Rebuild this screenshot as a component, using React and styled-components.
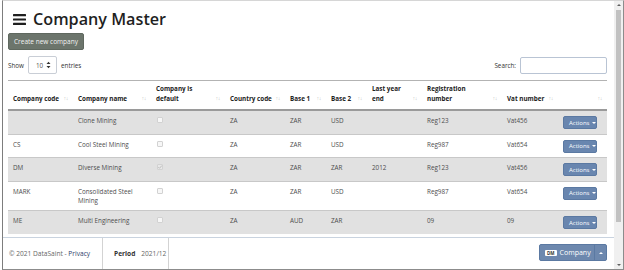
import React from "react";
import styled, { createGlobalStyle } from "styled-components";

const GlobalStyle = createGlobalStyle`
  html, body { margin: 0; padding: 0; background: #fff; overflow: hidden; }
  body { font-family: "Open Sans", "Noto Sans", sans-serif; color: #333; }
  * { box-sizing: border-box; }
`;

const Frame = styled.div`
  width: 622px;
  height: 270px;
  margin-left: 2px;
  border-left: 1px solid #7d7d7d;
  border-top: 1px solid #d6d6d6;
  border-right: 1px solid #8c8c8c;
  border-bottom: 1px solid #8c8c8c;
  display: flex;
`;

const Viewport = styled.div`
  flex: 1;
  min-width: 0;
  display: flex;
  flex-direction: column;
  overflow: hidden;
`;

const ScrollTrack = styled.div`
  width: 9px;
  display: flex;
  flex-direction: column;
  align-items: center;
  background: #f0f0f0;
`;

const ScrollArrow = styled.div`
  width: 100%;
  height: 8px;
  display: flex;
  align-items: center;
  justify-content: center;
  &::before {
    content: "";
    border-left: 2px solid transparent;
    border-right: 2px solid transparent;
    ${(p) => (p.$down ? "border-top: 2px solid #606060;" : "border-bottom: 2px solid #606060;")}
  }
`;

const ScrollThumb = styled.div`
  width: 5px;
  height: 212px;
  margin-top: 1px;
  background: #c1c1c1;
`;

const ScrollRest = styled.div`
  flex: 1;
`;

const Main = styled.main`
  flex: 1;
  min-height: 0;
  overflow: hidden;
  padding: 6px 7px 0 5px;
`;

const TitleRow = styled.div`
  display: flex;
  align-items: center;
  gap: 7px;
  height: 24px;
  padding-left: 5px;
`;

const Title = styled.h1`
  margin: 0;
  font-size: 16.2px;
  font-weight: 600;
  line-height: 24px;
  color: #1f1f1f;
`;

const CreateButton = styled.button`
  display: block;
  margin-top: 2px;
  height: 17px;
  padding: 0 5px;
  border: 1px solid #5f685f;
  border-radius: 2px;
  background: #6c756c;
  color: #f2f2f2;
  font-family: inherit;
  font-size: 6.5px;
`;

const Controls = styled.div`
  display: flex;
  justify-content: space-between;
  align-items: center;
  margin-top: 6px;
  height: 18px;
  font-size: 6.3px;
  color: #333;
`;

const Group = styled.label`
  display: flex;
  align-items: center;
  gap: 4px;
`;

const SelectBox = styled.div`
  display: flex;
  align-items: center;
  justify-content: space-between;
  width: 29px;
  height: 18px;
  padding: 0 5px 0 7px;
  border: 1px solid #c9ced6;
  border-radius: 2px;
  color: #555;
  font-size: 6.3px;
`;

const SearchInput = styled.div`
  width: 87px;
  height: 17px;
  border: 1px solid #b9c4d4;
  border-radius: 2px;
`;

const Table = styled.table`
  margin-top: 6px;
  width: 100%;
  table-layout: fixed;
  border-collapse: collapse;
  border-top: 1px solid #b3b3b3;
  font-size: 6.3px;
  line-height: 9.5px;
`;

const Th = styled.th`
  position: relative;
  padding: 3px 9px 6px 5px;
  text-align: left;
  vertical-align: bottom;
  font-weight: 700;
  color: #222;
  border-bottom: 2px solid #9a9a9a;
`;

const SortIcon = styled.span`
  position: absolute;
  right: 5px;
  bottom: 6px;
  color: #c4c4c4;
  font-weight: 400;
  font-size: 5.5px;
  letter-spacing: -0.5px;
  white-space: nowrap;
`;

const Tr = styled.tr`
  background: ${(p) => (p.$striped ? "#e1e1e1" : "#fff")};
`;

const Td = styled.td`
  padding: 5px 5px 4.5px;
  vertical-align: top;
  color: #4d4d4d;
  border-top: 1px solid #c8c8c8;
`;

const Check = styled.span`
  display: block;
  width: 6px;
  height: 6px;
  margin-top: 1px;
  margin-left: 1px;
  border: 1px solid #d2d2d2;
  border-radius: 1px;
  background: ${(p) => (p.$checked ? "#e8e8e8" : "#f7f7f7")};
  position: relative;
`;

const ActionsButton = styled.button`
  display: flex;
  align-items: center;
  gap: 3px;
  height: 13px;
  width: 34px;
  padding: 0 0 0 5px;
  border: 1px solid #5b79a2;
  border-radius: 2px;
  background: #6986af;
  color: #fff;
  font-family: inherit;
  font-size: 6px;
`;

const Caret = styled.span`
  width: 0;
  height: 0;
  border-left: 2px solid transparent;
  border-right: 2px solid transparent;
  border-top: 2px solid #fff;
`;

const Footer = styled.footer`
  flex: none;
  height: 32px;
  display: flex;
  align-items: stretch;
  background: #fff;
  border-top: 1px solid #c9d3df;
  font-size: 6.6px;
  color: #666;
`;

const FooterCell = styled.div`
  display: flex;
  align-items: center;
  gap: 5px;
  width: ${(p) => p.$width}px;
  padding-left: ${(p) => p.$pad}px;
  border-right: 1px solid #d3d3d3;
  white-space: nowrap;
`;

const Link = styled.a`
  color: #2c3b6b;
  text-decoration: none;
`;

const Strong = styled.b`
  color: #333;
  margin-right: 1px;
`;

const Spacer = styled.div`
  flex: 1;
`;

const SplitButton = styled.div`
  display: flex;
  align-self: flex-start;
  margin: 6px 7px 0 0;
  height: 17px;
  border: 1px solid #5b79a2;
  border-radius: 2px;
  background: #6d88ae;
  color: #fff;
`;

const SplitMain = styled.div`
  display: flex;
  align-items: center;
  gap: 3px;
  width: 55px;
  padding-left: 5px;
  font-size: 7px;
  border-right: 1px solid #5b79a2;
`;

const Badge = styled.span`
  background: #fff;
  color: #333;
  font-weight: 700;
  font-size: 4.5px;
  line-height: 6px;
  padding: 0 2px;
  border-radius: 1px;
`;

const SplitToggle = styled.div`
  display: flex;
  align-items: center;
  justify-content: center;
  width: 11px;
`;

const CaretUp = styled.span`
  width: 0;
  height: 0;
  border-left: 2px solid transparent;
  border-right: 2px solid transparent;
  border-bottom: 2px solid #fff;
`;

const columns = [
  { label: "Company code", width: 65 },
  { label: "Company name", width: 78 },
  { label: <>Company is<br />default</>, width: 74 },
  { label: "Country code", width: 60 },
  { label: "Base 1", width: 41 },
  { label: "Base 2", width: 41 },
  { label: <>Last year<br />end</>, width: 55 },
  { label: <>Registration<br />number</>, width: 80 },
  { label: "Vat number", width: 56 },
  { label: "", width: 49 },
];

const rows = [
  ["", "Clone Mining", false, "ZA", "ZAR", "USD", "", "Reg123", "Vat456"],
  ["CS", "Cool Steel Mining", false, "ZA", "ZAR", "USD", "", "Reg987", "Vat654"],
  ["DM", "Diverse Mining", true, "ZA", "ZAR", "ZAR", "2012", "Reg123", "Vat456"],
  ["MARK", "Consolidated Steel Mining", false, "ZA", "ZAR", "USD", "", "Reg987", "Vat654"],
  ["ME", "Multi Engineering", false, "ZA", "AUD", "ZAR", "", "09", "09"],
];

const Hamburger = () => (
  <svg width="13" height="11" viewBox="0 0 13 11">
    <rect x="0" y="0" width="13" height="2.2" rx="0.5" fill="#1f1f1f" />
    <rect x="0" y="4.4" width="13" height="2.2" rx="0.5" fill="#1f1f1f" />
    <rect x="0" y="8.8" width="13" height="2.2" rx="0.5" fill="#1f1f1f" />
  </svg>
);

const UpDown = () => (
  <svg width="5" height="8" viewBox="0 0 5 8">
    <path d="M0.5 3 L2.5 0.8 L4.5 3 Z M0.5 5 L2.5 7.2 L4.5 5 Z" fill="#333" />
  </svg>
);

const CheckMark = () => (
  <svg width="6" height="6" viewBox="0 0 6 6" style={{ position: "absolute", left: -1, top: -1 }}>
    <path d="M1.3 3.1 L2.5 4.3 L4.8 1.6" stroke="#b9b9b9" strokeWidth="0.9" fill="none" />
  </svg>
);

export default function App() {
  return (
    <>
      <GlobalStyle />
      <Frame>
        <Viewport>
          <Main>
            <TitleRow>
              <Hamburger />
              <Title>Company Master</Title>
            </TitleRow>
            <CreateButton>Create new company</CreateButton>
            <Controls>
              <Group>
                Show
                <SelectBox>
                  10
                  <UpDown />
                </SelectBox>
                entries
              </Group>
              <Group>
                Search:
                <SearchInput />
              </Group>
            </Controls>
            <Table>
              <colgroup>
                {columns.map((c, i) => (
                  <col key={i} style={{ width: c.width }} />
                ))}
              </colgroup>
              <thead>
                <tr>
                  {columns.map((c, i) => (
                    <Th key={i}>
                      {c.label}
                      <SortIcon>↑↓</SortIcon>
                    </Th>
                  ))}
                </tr>
              </thead>
              <tbody>
                {rows.map((r, i) => (
                  <Tr key={i} $striped={i % 2 === 0}>
                    <Td>{r[0]}</Td>
                    <Td>{r[1]}</Td>
                    <Td>
                      <Check $checked={r[2]}>{r[2] && <CheckMark />}</Check>
                    </Td>
                    <Td>{r[3]}</Td>
                    <Td>{r[4]}</Td>
                    <Td>{r[5]}</Td>
                    <Td>{r[6]}</Td>
                    <Td>{r[7]}</Td>
                    <Td>{r[8]}</Td>
                    <Td>
                      <ActionsButton>
                        Actions <Caret />
                      </ActionsButton>
                    </Td>
                  </Tr>
                ))}
              </tbody>
            </Table>
          </Main>
          <Footer>
            <FooterCell $width={100} $pad={6}>
              <span>
                © 2021 DataSaint - <Link href="#">Privacy</Link>
              </span>
            </FooterCell>
            <FooterCell $width={66} $pad={11}>
              <Strong>Period</Strong>
              <span>2021/12</span>
            </FooterCell>
            <Spacer />
            <SplitButton>
              <SplitMain>
                <Badge>DM</Badge>
                Company
              </SplitMain>
              <SplitToggle>
                <CaretUp />
              </SplitToggle>
            </SplitButton>
          </Footer>
        </Viewport>
        <ScrollTrack>
          <ScrollArrow />
          <ScrollThumb />
          <ScrollRest />
          <ScrollArrow $down />
        </ScrollTrack>
      </Frame>
    </>
  );
}
